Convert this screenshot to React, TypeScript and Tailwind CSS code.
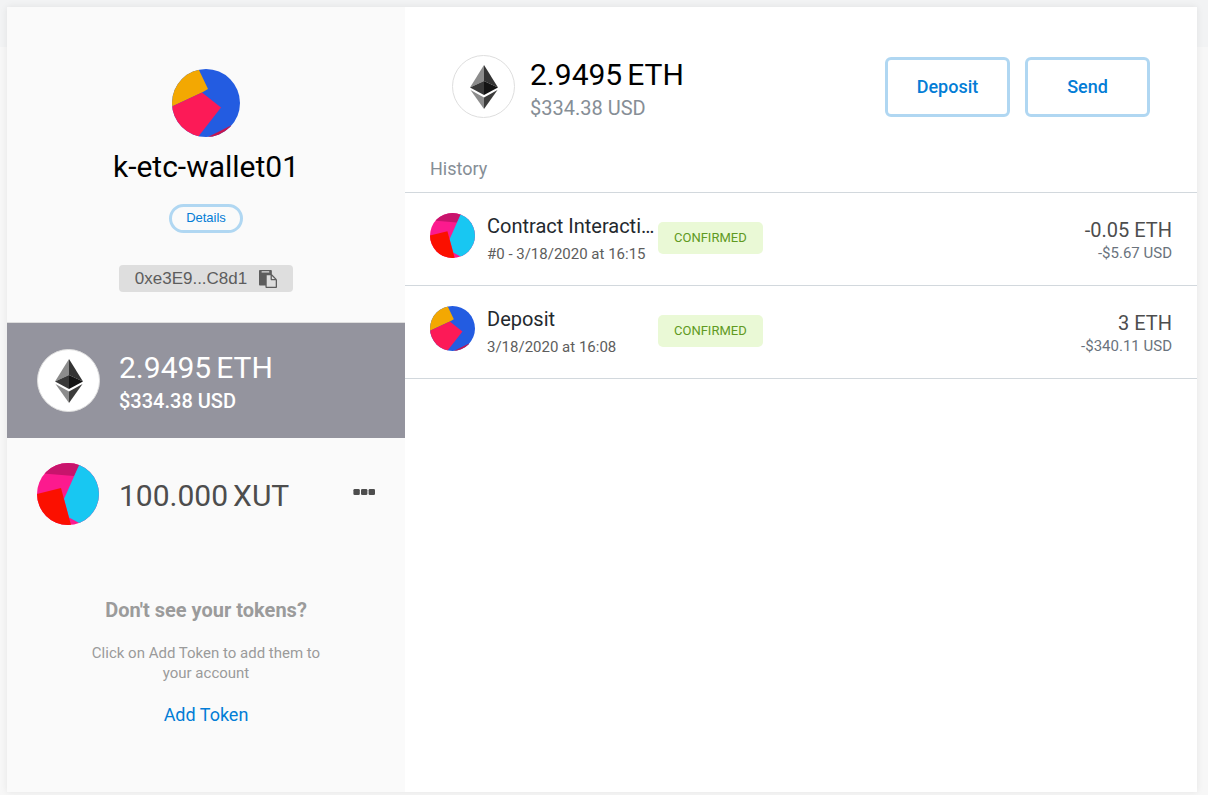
import { clsx } from 'clsx';

type AvatarKind = 'wallet' | 'token';

interface Transaction {
  id: number;
  avatar: AvatarKind;
  title: string;
  date: string;
  status: string;
  amount: string;
  fiat: string;
}

const transactions: Transaction[] = [
  {
    id: 1,
    avatar: 'token',
    title: 'Contract Interaction',
    date: '#0 - 3/18/2020 at 16:15',
    status: 'CONFIRMED',
    amount: '-0.05 ETH',
    fiat: '-$5.67 USD',
  },
  {
    id: 2,
    avatar: 'wallet',
    title: 'Deposit',
    date: '3/18/2020 at 16:08',
    status: 'CONFIRMED',
    amount: '3 ETH',
    fiat: '-$340.11 USD',
  },
];

function Avatar({ kind, className }: { kind: AvatarKind; className: string }) {
  if (kind === 'wallet') {
    return (
      <svg viewBox="0 0 68 68" className={clsx('shrink-0 rounded-full', className)} aria-hidden="true">
        <rect width="68" height="68" fill="#235ce1" />
        <path d="M0 0H26.500L36 20L30 23.500L0 37.500Z" fill="#f3a802" />
        <path d="M0 37.500L30 23.500L49 38.500L26 68H0Z" fill="#fc1a57" />
        <path d="M35 68.500L59 56.500L68 68Z" fill="#c8144c" />
      </svg>
    );
  }
  return (
    <svg viewBox="0 0 62 62" className={clsx('shrink-0 rounded-full', className)} aria-hidden="true">
      <rect width="62" height="62" fill="#fc1a8e" />
      <path d="M0 10L37 13L44 0H0Z" fill="#c8146c" />
      <path d="M43 0H62V62H46L32 54.500L27 36Z" fill="#18c7f2" />
      <path d="M0 31L24 25L34 62H0Z" fill="#fb1000" />
    </svg>
  );
}

function EthLogo() {
  return (
    <svg viewBox="0 0 63 63" className="size-[63px] shrink-0" aria-hidden="true">
      <circle cx="31.5" cy="31.5" r="31" fill="#fff" stroke="#dedede" />
      <path d="M32 10L18 32.500L32 26Z" fill="#8c8c8c" />
      <path d="M32 10V26L46 32.500Z" fill="#343434" />
      <path d="M18 32.500L32 26V40Z" fill="#393939" />
      <path d="M46 32.500L32 26V40Z" fill="#141414" />
      <path d="M18.500 35L32 42.500V54Z" fill="#8c8c8c" />
      <path d="M45.500 35L32 42.500V54Z" fill="#3c3c3b" />
    </svg>
  );
}

function CopyIcon() {
  return (
    <svg viewBox="0 0 1792 1792" className="size-[18px]" fill="currentColor" aria-hidden="true">
      <path d="M768 1664h896v-640h-416q-40 0-68-28t-28-68v-416h-384v1152zm256-1440v-64q0-13-9.500-22.500t-22.500-9.500h-704q-13 0-22.500 9.500t-9.500 22.500v64q0 13 9.500 22.500t22.500 9.500h704q13 0 22.500-9.500t9.500-22.500zm256 672h299l-299-299v299zm512 128v672q0 40-28 68t-68 28h-960q-40 0-68-28t-28-68v-160h-544q-40 0-68-28t-28-68v-1344q0-40 28-68t68-28h1088q40 0 68 28t28 68v328q21 13 36 28l408 408q28 28 48 76t20 88z" />
    </svg>
  );
}

function Balance({ value, unit }: { value: string; unit: string }) {
  return (
    <div className="flex gap-[5px] text-[30px] leading-9">
      <span>{value}</span>
      <span>{unit}</span>
    </div>
  );
}

function Sidebar() {
  return (
    <aside className="w-[398px] shrink-0 bg-[#fafafa]">
      <div className="flex flex-col items-center border-b border-[#dedede] pt-[62px] pb-[30px]">
        <Avatar kind="wallet" className="size-[68px]" />
        <h1 className="mt-3 text-[30px] leading-9 text-black">k-etc-wallet01</h1>
        <button
          type="button"
          className="mt-[19px] h-[29px] rounded-full border-3 border-[#b0d7f2] px-[14px] pb-[2px] font-['Liberation_Sans',sans-serif] text-[13px] leading-5 text-[#037dd6]"
        >
          Details
        </button>
        <button
          type="button"
          className="mt-8 flex h-[27px] items-center gap-3 rounded-[4px] bg-[#dedede] px-4 font-['Liberation_Sans',sans-serif] text-[17px] text-[#5d5d5d]"
        >
          0xe3E9...C8d1
          <CopyIcon />
        </button>
      </div>

      <div className="flex h-[115px] items-center gap-[19px] bg-[#94949e] px-[30px] text-white">
        <EthLogo />
        <div className="pt-1">
          <Balance value="2.9495" unit="ETH" />
          <div className="text-xl leading-[30px] font-medium">$334.38 USD</div>
        </div>
      </div>

      <div className="flex h-[111px] items-center gap-5 px-[30px] text-[#4d4d4d]">
        <Avatar kind="token" className="size-[62px]" />
        <div className="pt-1">
          <Balance value="100.000" unit="XUT" />
        </div>
        <button type="button" aria-label="Token options" className="ml-auto pb-1">
          <svg viewBox="0 0 22 6" className="h-[6px] w-[22px]" fill="currentColor" aria-hidden="true">
            <rect x="0.4" width="6.4" height="6" rx="1.3" />
            <rect x="8" width="6.4" height="6" rx="1.3" />
            <rect x="15.6" width="6.4" height="6" rx="1.3" />
          </svg>
        </button>
      </div>

      <div className="flex flex-col items-center px-20 pt-12 text-center text-[#9b9b9b]">
        <h2 className="text-xl leading-[26px] font-bold">Don't see your tokens?</h2>
        <p className="mt-5 text-[15px] leading-5">Click on Add Token to add them to your account</p>
        <button type="button" className="mt-5 text-lg leading-6 text-[#037dd6]">
          Add Token
        </button>
      </div>
    </aside>
  );
}

function ActionButton({ label }: { label: string }) {
  return (
    <button
      type="button"
      className="h-[60px] w-[125px] rounded-md border-3 border-[#b0d7f2] text-lg font-medium text-[#037dd6]"
    >
      {label}
    </button>
  );
}

function TransactionRow({ tx }: { tx: Transaction }) {
  return (
    <li className="grid grid-cols-[45px_183px_auto_1fr] items-center border-b border-[#d2d8dd] px-[25px] pt-5 pb-4">
      <Avatar kind={tx.avatar} className="size-[45px] self-start" />
      <div className="pl-3">
        <div className="truncate text-xl leading-[26px] text-[#24292e]">{tx.title}</div>
        <div className="text-[15px] leading-[30px] whitespace-nowrap text-[#5d5d5d]">{tx.date}</div>
      </div>
      <span className="mt-[9px] self-start rounded-[5px] bg-[#eaf9d6] px-4 py-[6px] text-[13px] leading-5 text-[#5f9a22]">
        {tx.status}
      </span>
      <div className="text-right">
        <div className="text-xl leading-6 text-[#4d4d4d]">{tx.amount}</div>
        <div className="text-[15px] leading-[22px] text-[#6a737d]">{tx.fiat}</div>
      </div>
    </li>
  );
}

export default function App() {
  return (
    <div className="flex min-h-screen bg-[linear-gradient(#f2f3f4_47px,#f7f7f7_47px)] pt-[7px] pr-[11px] pb-[3px] pl-[7px] font-[Roboto,sans-serif]">
      <div className="flex flex-1 bg-white shadow-[0_0_7px_0_rgba(0,0,0,0.08)]">
        <Sidebar />
        <main className="min-w-0 flex-1">
          <header className="flex items-start justify-between px-[47px] pt-12">
            <div className="flex gap-[15px]">
              <EthLogo />
              <div className="pt-0.5 text-black">
                <Balance value="2.9495" unit="ETH" />
                <div className="text-xl leading-[30px] text-[#868e96]">$334.38 USD</div>
              </div>
            </div>
            <div className="flex gap-[15px] pt-0.5">
              <ActionButton label="Deposit" />
              <ActionButton label="Send" />
            </div>
          </header>
          <h2 className="mt-7 border-b border-[#d2d8dd] px-[25px] pt-[6px] pb-[11px] text-lg leading-6 text-[#868e96]">
            History
          </h2>
          <ul>
            {transactions.map((tx) => (
              <TransactionRow key={tx.id} tx={tx} />
            ))}
          </ul>
        </main>
      </div>
    </div>
  );
}
